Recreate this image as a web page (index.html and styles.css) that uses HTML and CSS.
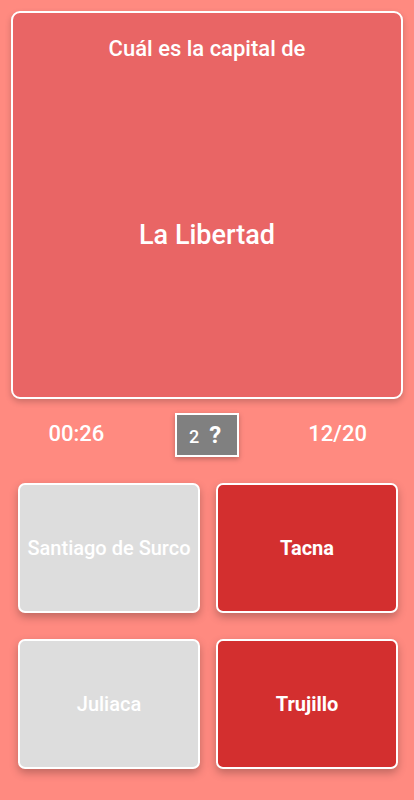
FILE: index.html
```html
<!DOCTYPE html>
<html lang="es">
<head>
    <meta charset="UTF-8" />
    <title>Capitales</title>
    <link rel="stylesheet" href="styles.css">
</head>
<body>

<div class="game">
    <!-- pregunta -->
    <div class="question-card">
        <div class="question">Cuál es la capital de</div>
        <div class="place">La Libertad</div>
    </div>

    <!-- estado -->
    <div class="status">
        <div class="timer">00:26</div>
        <div class="hint-wrap">
            <div class="hint"><span class="hint-count">2</span><span class="hint-mark">?</span></div>
        </div>
        <div class="progress">12/20</div>
    </div>
</div>

<!-- respuestas -->
<div class="answers">
    <button class="answer disabled">Santiago de Surco</button>
    <button class="answer">Tacna</button>
    <button class="answer disabled">Juliaca</button>
    <button class="answer">Trujillo</button>
</div>

</body>
</html>
```

FILE: styles.css
```css
body {
    margin: 0;
    background: #ff8a80;
    font-family: Roboto, 'Noto Sans', sans-serif;
    color: #fff;
    height: 800px;
    overflow: hidden;
}

.game {
    padding: 11px 11px 0;
}

.question-card {
    height: 384px;
    border: 2px solid #fff;
    border-radius: 9px;
    background: #e96565;
    box-shadow: 0 3px 6px rgba(0, 0, 0, 0.2);
    text-align: center;
}

.question {
    margin-top: 23px;
    font-size: 22px;
    line-height: 26px;
    font-weight: 500;
}

.place {
    margin-top: 156px;
    font-size: 27px;
    line-height: 34px;
    font-weight: 500;
}

.status {
    display: grid;
    grid-template-columns: 1fr 1fr 1fr;
    align-items: center;
    margin-top: 14px;
    text-align: center;
    font-size: 22px;
    font-weight: 500;
}

.timer,
.progress {
    padding-bottom: 4px;
}

.hint-wrap {
    display: flex;
    justify-content: center;
}

.hint {
    width: 56px;
    height: 40px;
    border: 2px solid #fff;
    background: #808080;
    box-shadow: 0 2px 5px rgba(0, 0, 0, 0.25);
    display: flex;
    align-items: center;
    justify-content: center;
    gap: 10px;
    padding-right: 4px;
}

.hint-count {
    font-size: 18px;
    font-weight: 500;
    padding-top: 3px;
}

.hint-mark {
    font-size: 24px;
    font-weight: 700;
}

.answers {
    display: grid;
    grid-template-columns: 182px 182px;
    grid-auto-rows: 130px;
    column-gap: 16px;
    row-gap: 26px;
    padding: 26px 0 0 18px;
}

.answer {
    margin: 0;
    border: 2px solid #fff;
    border-radius: 7px;
    background: #d32f2f;
    color: #fff;
    font-family: Roboto, 'Noto Sans', sans-serif;
    font-size: 20px;
    font-weight: 700;
    box-shadow: 0 4px 8px rgba(0, 0, 0, 0.25);
    padding: 0;
}

.answer.disabled {
    background: #dddddd;
    font-weight: 500;
}
```
